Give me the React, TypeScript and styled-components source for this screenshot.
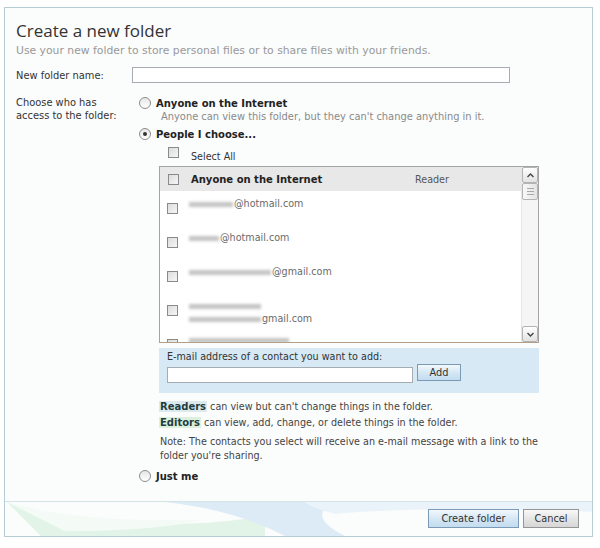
import React from "react";
import styled, { createGlobalStyle } from "styled-components";

const GlobalStyle = createGlobalStyle`
  html, body { margin: 0; padding: 0; background: #fff; }
  body {
    font-family: "DejaVu Sans", Verdana, sans-serif;
    font-size: 9.6px;
    color: #333;
  }
  * { box-sizing: border-box; }
`;

const Page = styled.div`
  padding: 7px 7px 0 4px;
`;

const Panel = styled.div`
  height: 530px;
  border: 1px solid #b7cdd5;
  background: #fbfcfc;
  display: flex;
  flex-direction: column;
`;

const Content = styled.div`
  flex: 1;
  padding: 12px 0 0 11px;
`;

const Title = styled.h1`
  margin: 0;
  font-family: "Open Sans", "DejaVu Sans", sans-serif;
  font-weight: 400;
  font-size: 17px;
  line-height: 22px;
  color: #333;
`;

const Subtitle = styled.div`
  margin-top: 3px;
  line-height: 12px;
  font-size: 10.8px;
  color: #999;
`;

const FieldRow = styled.div<{ $top: number }>`
  display: grid;
  grid-template-columns: 116px 1fr;
  align-items: ${(p) => (p.$top > 12 ? "start" : "center")};
  margin-top: ${(p) => p.$top}px;
`;

const FieldLabel = styled.div`
  line-height: 13px;
  font-size: 9.9px;
  color: #333;
`;

const TextInput = styled.div<{ $w: number }>`
  width: ${(p) => p.$w}px;
  height: 16px;
  border: 1px solid #a5acb2;
  background: #fff;
`;

const Options = styled.div`
  display: flex;
  flex-direction: column;
`;

const RadioRow = styled.div<{ $top: number }>`
  display: flex;
  align-items: center;
  gap: 5px;
  height: 14px;
  padding-left: 7px;
  margin-top: ${(p) => p.$top}px;
`;

const RadioCircle = styled.span<{ $checked?: boolean }>`
  width: 12px;
  height: 12px;
  border-radius: 50%;
  border: 1px solid #8d8d8d;
  background: linear-gradient(#e6e6e6, #ffffff);
  display: flex;
  align-items: center;
  justify-content: center;
  &::after {
    content: "";
    width: 4px;
    height: 4px;
    border-radius: 50%;
    background: ${(p) => (p.$checked ? "#333" : "transparent")};
  }
`;

const BoldLabel = styled.span`
  font-weight: bold;
  font-size: 10px;
  color: #222;
`;

const Desc = styled.div`
  padding-left: 29px;
  margin-top: 1px;
  line-height: 12px;
  font-size: 9.9px;
  color: #8a8a8a;
`;

const Nested = styled.div`
  padding-left: 27px;
  display: flex;
  flex-direction: column;
`;

const SelectRow = styled.div`
  display: flex;
  align-items: flex-start;
  height: 14px;
  margin-top: 6px;
  padding-left: 9px;
`;

const Check = styled.span`
  flex: none;
  width: 11px;
  height: 11px;
  border: 1px solid #8a8a8a;
  background: linear-gradient(135deg, #dcdcdc, #f6f6f6);
`;

const SelectText = styled.span`
  margin-left: 12px;
  margin-top: 2.5px;
  line-height: 13px;
  color: #333;
`;

const ListBox = styled.div`
  margin-top: 5px;
  width: 380px;
  height: 177px;
  border: 1px solid #a3a3a3;
  border-bottom-color: #b59e86;
  background: #fff;
  display: flex;
`;

const ListBody = styled.div`
  flex: 1;
  overflow: hidden;
`;

const HeaderRow = styled.div`
  height: 24px;
  background: #e8e8e8;
  display: flex;
  align-items: center;
  padding-left: 8px;
`;

const HeaderName = styled.span`
  margin-left: 12px;
  width: 224px;
  font-weight: bold;
  font-size: 10px;
  color: #222;
`;

const HeaderRole = styled.span`
  color: #555;
`;

const Row = styled.div`
  height: 34px;
  display: flex;
  align-items: flex-start;
  padding: 6px 0 0 7px;
  & > ${Check} {
    margin-top: 6px;
  }
`;

const RowText = styled.div`
  margin-left: 11px;
  line-height: 13px;
  color: #6a6a6a;
  display: flex;
  flex-direction: column;
`;

const Blur = styled.span<{ $w: number }>`
  display: inline-block;
  width: ${(p) => p.$w}px;
  height: 5px;
  background: #c4c4c4;
  filter: blur(1.6px);
  vertical-align: middle;
  margin-right: 1px;
`;

const Scrollbar = styled.div`
  width: 17px;
  background: #f5f5f5;
  border-left: 1px solid #e6e6e6;
  display: flex;
  flex-direction: column;
`;

const ScrollBtn = styled.div`
  height: 16px;
  border: 1px solid #b3b3b3;
  border-radius: 2px;
  background: linear-gradient(#ffffff, #e2e2e2);
  display: flex;
  align-items: center;
  justify-content: center;
`;

const Thumb = styled.div`
  height: 17px;
  border: 1px solid #b3b3b3;
  border-radius: 2px;
  background: linear-gradient(90deg, #f8f8f8, #e4e4e4);
  display: flex;
  flex-direction: column;
  align-items: center;
  justify-content: center;
  gap: 2px;
  & > i {
    display: block;
    width: 7px;
    height: 1px;
    background: #a8a8a8;
  }
`;

const Track = styled.div`
  flex: 1;
`;

const AddBox = styled.div`
  margin-top: 5px;
  width: 380px;
  background: #d6e9f5;
  padding: 3px 8px 10px;
`;

const AddLabel = styled.div`
  line-height: 12px;
  color: #333;
`;

const AddRow = styled.div`
  display: flex;
  align-items: flex-start;
  gap: 4px;
  margin-top: 1px;
  & > ${TextInput} {
    margin-top: 3px;
  }
`;

const Button = styled.button<{ $w: number; $tone: "blue" | "gray" }>`
  width: ${(p) => p.$w}px;
  height: 19px;
  padding: 0;
  font-family: "DejaVu Sans", Verdana, sans-serif;
  font-size: 9.8px;
  color: #333;
  border: 1px solid ${(p) => (p.$tone === "blue" ? "#7b9ab5" : "#959595")};
  background: ${(p) =>
    p.$tone === "blue"
      ? "linear-gradient(#f3f8fc, #d3e6f4 55%, #c3dcef)"
      : "linear-gradient(#f8f8f8, #e4e4e4 55%, #d6d6d6)"};
  position: relative;
  z-index: 1;
`;

const AddButton = styled(Button)`
  height: 17px;
`;

const InfoLine = styled.div<{ $top: number }>`
  margin-top: ${(p) => p.$top}px;
  padding-left: 1px;
  line-height: 13px;
  color: #444;
`;

const Term = styled.span<{ $tone: "blue" | "green" }>`
  font-weight: bold;
  font-size: 10px;
  color: #1f3d3f;
  background: ${(p) => (p.$tone === "blue" ? "#dceaee" : "#ddf0de")};
  padding: 0 1px;
  margin-left: -1px;
`;

const Note = styled.div`
  margin-top: 6px;
  padding-left: 1px;
  line-height: 14px;
  color: #444;
  width: 380px;
`;

const Footer = styled.div`
  height: 35px;
  border-top: 1px solid #d5e2e6;
  position: relative;
  display: flex;
  justify-content: flex-end;
  align-items: flex-start;
  gap: 4px;
  padding: 7px 13px 0 0;
  overflow: hidden;
`;

const Swoosh = styled.svg`
  position: absolute;
  left: 0;
  top: 0;
  width: 100%;
  height: 100%;
`;

const Chevron = ({ up }: { up?: boolean }) => (
  <svg width="7" height="5" viewBox="0 0 7 5">
    <path
      d={up ? "M0.5 4 L3.5 1 L6.5 4" : "M0.5 1 L3.5 4 L6.5 1"}
      fill="none"
      stroke="#444"
      strokeWidth="1.4"
    />
  </svg>
);

type Contact = { blur: number[]; domain: string; twoLine?: boolean };

const contacts: Contact[] = [
  { blur: [44], domain: "@hotmail.com" },
  { blur: [30], domain: "@hotmail.com" },
  { blur: [82], domain: "@gmail.com" },
  { blur: [72, 72], domain: "gmail.com", twoLine: true },
  { blur: [100], domain: "" },
];

export default function App() {
  return (
    <>
      <GlobalStyle />
      <Page>
        <Panel>
          <Content>
            <Title>Create a new folder</Title>
            <Subtitle>
              Use your new folder to store personal files or to share files with your friends.
            </Subtitle>
            <FieldRow $top={10}>
              <FieldLabel>New folder name:</FieldLabel>
              <TextInput $w={378} />
            </FieldRow>
            <FieldRow $top={13}>
              <FieldLabel>
                Choose who has
                <br />
                access to the folder:
              </FieldLabel>
              <Options>
                <RadioRow $top={0}>
                  <RadioCircle />
                  <BoldLabel>Anyone on the Internet</BoldLabel>
                </RadioRow>
                <Desc>Anyone can view this folder, but they can't change anything in it.</Desc>
                <RadioRow $top={4}>
                  <RadioCircle $checked />
                  <BoldLabel>People I choose...</BoldLabel>
                </RadioRow>
                <Nested>
                  <SelectRow>
                    <Check />
                    <SelectText>Select All</SelectText>
                  </SelectRow>
                  <ListBox>
                    <ListBody>
                      <HeaderRow>
                        <Check />
                        <HeaderName>Anyone on the Internet</HeaderName>
                        <HeaderRole>Reader</HeaderRole>
                      </HeaderRow>
                      {contacts.map((c, i) => (
                        <Row key={i}>
                          <Check />
                          <RowText>
                            {c.twoLine ? (
                              <>
                                <span>
                                  <Blur $w={c.blur[0]} />
                                </span>
                                <span>
                                  <Blur $w={c.blur[1]} />
                                  {c.domain}
                                </span>
                              </>
                            ) : (
                              <span>
                                <Blur $w={c.blur[0]} />
                                {c.domain}
                              </span>
                            )}
                          </RowText>
                        </Row>
                      ))}
                    </ListBody>
                    <Scrollbar>
                      <ScrollBtn>
                        <Chevron up />
                      </ScrollBtn>
                      <Thumb>
                        <i />
                        <i />
                        <i />
                      </Thumb>
                      <Track />
                      <ScrollBtn>
                        <Chevron />
                      </ScrollBtn>
                    </Scrollbar>
                  </ListBox>
                  <AddBox>
                    <AddLabel>E-mail address of a contact you want to add:</AddLabel>
                    <AddRow>
                      <TextInput $w={246} />
                      <AddButton $w={44} $tone="blue">
                        Add
                      </AddButton>
                    </AddRow>
                  </AddBox>
                  <InfoLine $top={7}>
                    <Term $tone="blue">Readers</Term> can view but can't change things in the folder.
                  </InfoLine>
                  <InfoLine $top={3}>
                    <Term $tone="green">Editors</Term> can view, add, change, or delete things in the folder.
                  </InfoLine>
                  <Note>
                    Note: The contacts you select will receive an e-mail message with a link to the
                    folder you're sharing.
                  </Note>
                </Nested>
                <RadioRow $top={6}>
                  <RadioCircle />
                  <BoldLabel>Just me</BoldLabel>
                </RadioRow>
              </Options>
            </FieldRow>
          </Content>
          <Footer>
            <Swoosh viewBox="0 0 587 35" preserveAspectRatio="none">
              <path d="M2 0 Q 60 28 190 22 Q 230 20 260 14 L 260 35 L 36 35 Z" fill="#e2f4e7" />
              <path d="M2 0 Q 70 22 200 18 Q 150 30 60 30 Z" fill="#f4fbf6" />
              <path d="M160 0 L 330 0 Q 300 14 340 35 L 280 35 Q 230 8 160 0 Z" fill="#dcebf6" />
              <path d="M300 0 L 587 0 L 587 10 Q 420 4 330 12 Q 305 6 300 0 Z" fill="#e9f3f9" />
            </Swoosh>
            <Button $w={91} $tone="blue">
              Create folder
            </Button>
            <Button $w={56} $tone="gray">
              Cancel
            </Button>
          </Footer>
        </Panel>
      </Page>
    </>
  );
}
